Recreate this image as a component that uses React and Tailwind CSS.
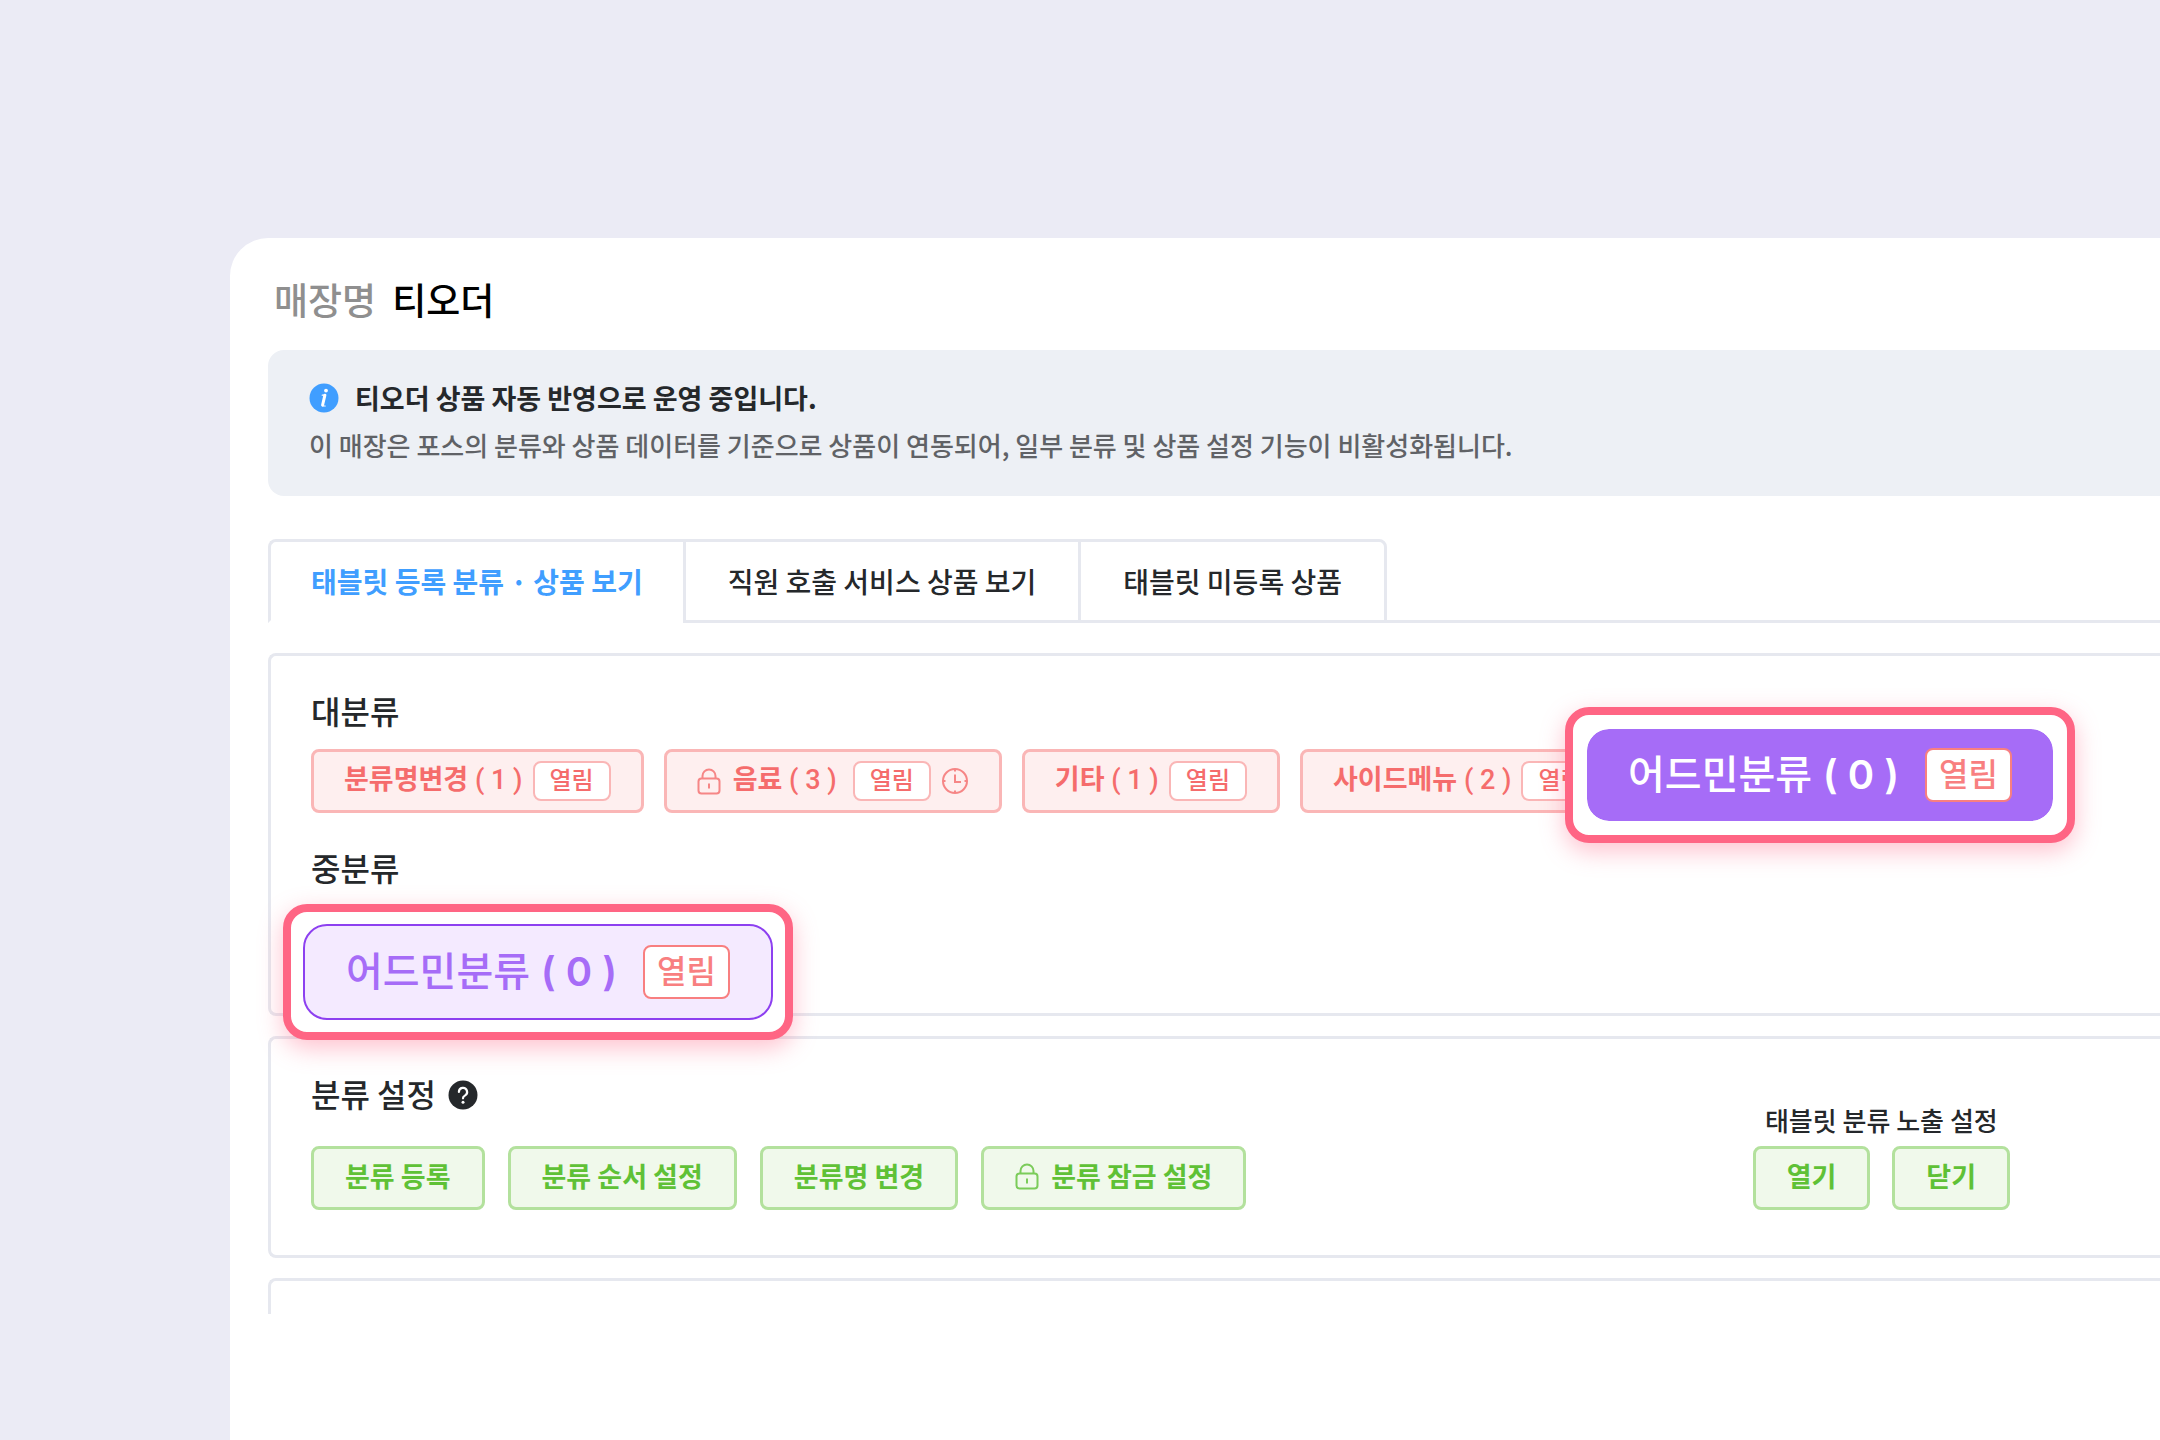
import React from "react";

const krFont = "font-['Noto_Sans_CJK_KR',sans-serif]";
const chipFont = "font-['Roboto','Noto_Sans_CJK_KR',sans-serif]";
const bigFont = "font-['Inter','Noto_Sans_CJK_KR',sans-serif]";

function InfoIcon() {
  return (
    <svg className="size-[30px] shrink-0" viewBox="0 0 30 30" aria-hidden="true">
      <circle cx="15" cy="15" r="14.5" fill="#409eff" />
      <circle cx="17" cy="7.6" r="1.9" fill="#fff" />
      <path d="M15.900 12.200l-2.300 9.800" fill="none" stroke="#fff" strokeWidth="3" strokeLinecap="round" />
      <path d="M13.200 12.200h2.500M13.600 23h2.600" fill="none" stroke="#fff" strokeWidth="1.200" strokeLinecap="round" />
    </svg>
  );
}

function HelpIcon() {
  return (
    <svg className="size-[30px] shrink-0" viewBox="0 0 30 30" aria-hidden="true">
      <circle cx="15" cy="15" r="14.5" fill="#25282b" />
      <path d="M10.9 12a4.1 4.1 0 1 1 6 3.6c-1.3.7-1.9 1.300-1.900 2.700" fill="none" stroke="#fff" strokeWidth="2.200" strokeLinecap="round" />
      <circle cx="15" cy="22.300" r="1.500" fill="#fff" />
    </svg>
  );
}

function LockIcon() {
  return (
    <svg className="h-7 w-6 shrink-0" viewBox="0 0 24 28" fill="none" stroke="currentColor" strokeWidth="2" opacity="0.8" aria-hidden="true">
      <rect x="1.500" y="11.500" width="21" height="15" rx="3" />
      <path d="M5.500 11.500V9a6.500 6.500 0 0 1 13 0v2.500M12 16.500v5" />
    </svg>
  );
}

function ClockIcon() {
  return (
    <svg className="size-7 shrink-0" viewBox="0 0 28 28" fill="none" stroke="currentColor" strokeWidth="2" opacity="0.8" aria-hidden="true">
      <circle cx="14" cy="14" r="12" />
      <path d="M14 7.500V15h6" />
      <path d="M14 2v2.500M14 23.500V26M2 14h2.500M23.500 14H26" />
    </svg>
  );
}

function CategoryChip({ name, count, locked, timed }) {
  return (
    <button type="button" className={`${chipFont} flex h-16 shrink-0 items-center rounded-lg border-3 border-[#fab6b6] bg-[#feefef] px-[30px] text-[27px] font-medium whitespace-nowrap text-[#f56c6c]`}>
      {locked && <span className="mr-3"><LockIcon /></span>}
      <span className="pb-0.5"><span className="font-bold">{name}</span> ( {count} )</span>
      <span className={`flex h-10 items-center rounded-lg border-2 border-[#fab6b6] bg-white px-[15px] text-2xl ${locked ? "ml-4" : "ml-2.5"}`}>열림</span>
      {timed && <span className="ml-2.5"><ClockIcon /></span>}
    </button>
  );
}

function Highlight({ place, look }) {
  return (
    <div className={`absolute z-10 rounded-[24px] border-8 border-[#ff6584] bg-white p-3 shadow-[0_8px_24px_rgba(255,101,132,0.4)] ${place}`}>
      <button type="button" className={`${bigFont} flex h-24 items-center rounded-[24px] border-2 px-[41px] text-[40px] font-medium whitespace-nowrap ${look}`}>
        <span>어드민분류 <span className="font-semibold">( 0 )</span></span>
        <span className="ml-[26px] flex h-[54px] items-center rounded-lg border-2 border-[#f87f80] bg-white px-3 text-[32px] text-[#f87f80]">열림</span>
      </button>
    </div>
  );
}

function GreenButton({ children, locked }) {
  return (
    <button type="button" className="flex h-16 shrink-0 items-center gap-3 rounded-lg border-3 border-[#b3e19d] bg-[#f0f9eb] px-[31px] pb-1 text-[27px] font-bold whitespace-nowrap text-[#5fc136]">
      {locked && <LockIcon />}
      {children}
    </button>
  );
}

const tabs = ["태블릿 등록 분류 · 상품 보기", "직원 호출 서비스 상품 보기", "태블릿 미등록 상품"];
const tabLooks = [
  "rounded-tl-lg border-l-3 border-b-white px-10 font-bold text-[#409eff]",
  "border-l-3 border-b-[#e6e8ef] px-[42px] font-medium text-[#25282b]",
  "rounded-tr-lg border-x-3 border-b-[#e6e8ef] px-[42px] font-medium text-[#25282b]",
];

export default function App() {
  return (
    <div className={`${krFont} flex min-h-screen flex-col overflow-hidden bg-[#ebebf5] pt-[238px] pl-[230px]`}>
      <main className="grow rounded-tl-[38px] bg-white pl-[38px]">
        <h1 className="flex h-28 items-center gap-4 pt-3 pl-1.5 text-[37px] font-medium text-black">
          <span className="text-[#8f8f8f]">매장명</span>
          <span>티오더</span>
        </h1>

        <section className="h-[146px] rounded-l-2xl bg-[#edf0f5] pt-7 pl-[41px] whitespace-nowrap">
          <div className="flex h-10 items-center gap-4">
            <InfoIcon />
            <h2 className="text-[27px] font-bold text-[#25282b]">티오더 상품 자동 반영으로 운영 중입니다.</h2>
          </div>
          <p className="text-[26px] leading-[54px] font-medium text-[#606266]">
            이 매장은 포스의 분류와 상품 데이터를 기준으로 상품이 연동되어, 일부 분류 및 상품 설정 기능이 비활성화됩니다.
          </p>
        </section>

        <nav className="mt-[43px] flex h-[84px]" role="tablist">
          {tabs.map((tab, i) => (
            <button key={tab} type="button" role="tab" aria-selected={i === 0} className={`border-t-3 border-b-3 border-t-[#e6e8ef] border-r-[#e6e8ef] border-l-[#e6e8ef] text-[28px] whitespace-nowrap ${tabLooks[i]}`}>
              {tab}
            </button>
          ))}
          <div className="grow border-b-3 border-[#e6e8ef]" />
        </nav>

        <section className="mt-[30px] h-[363px] rounded-l-lg border-3 border-r-0 border-[#e6e8ef] pt-[30px] pl-10 text-[#25282b]">
          <h3 className="text-[32px] leading-[48px] font-medium">대분류</h3>
          <div className="relative mt-[15px] flex gap-5">
            <CategoryChip name="분류명변경" count={1} />
            <CategoryChip name="음료" count={3} locked timed />
            <CategoryChip name="기타" count={1} />
            <CategoryChip name="사이드메뉴" count={2} />
            <Highlight place="-top-[42px] right-[85px]" look="border-white bg-[#a66cf7] bg-clip-padding text-white" />
          </div>
          <div className="relative mt-[30px]">
            <h3 className="text-[32px] leading-[48px] font-medium">중분류</h3>
            <Highlight place="top-[61px] -left-7" look="border-[#8d40f0] bg-[#f4eaff] text-[#a66cf7]" />
          </div>
        </section>

        <section className="mt-5 flex h-[222px] justify-between rounded-l-lg border-3 border-r-0 border-[#e6e8ef] pt-[30px] pr-[150px] pl-10 text-[#25282b]">
          <div>
            <h3 className="flex items-center gap-3 text-[32px] leading-[48px] font-medium">
              분류 설정 <span className="pt-1"><HelpIcon /></span>
            </h3>
            <div className="mt-[29px] flex gap-[23px]">
              <GreenButton>분류 등록</GreenButton>
              <GreenButton>분류 순서 설정</GreenButton>
              <GreenButton>분류명 변경</GreenButton>
              <GreenButton locked>분류 잠금 설정</GreenButton>
            </div>
          </div>
          <div className="pt-[29px]">
            <h4 className="mb-1 text-center text-[26px] leading-[44px] font-medium">태블릿 분류 노출 설정</h4>
            <div className="flex gap-[22px]">
              <GreenButton>열기</GreenButton>
              <GreenButton>닫기</GreenButton>
            </div>
          </div>
        </section>

        <section className="mt-5 h-9 rounded-tl-lg border-t-3 border-l-3 border-[#e6e8ef]" />
      </main>
    </div>
  );
}
